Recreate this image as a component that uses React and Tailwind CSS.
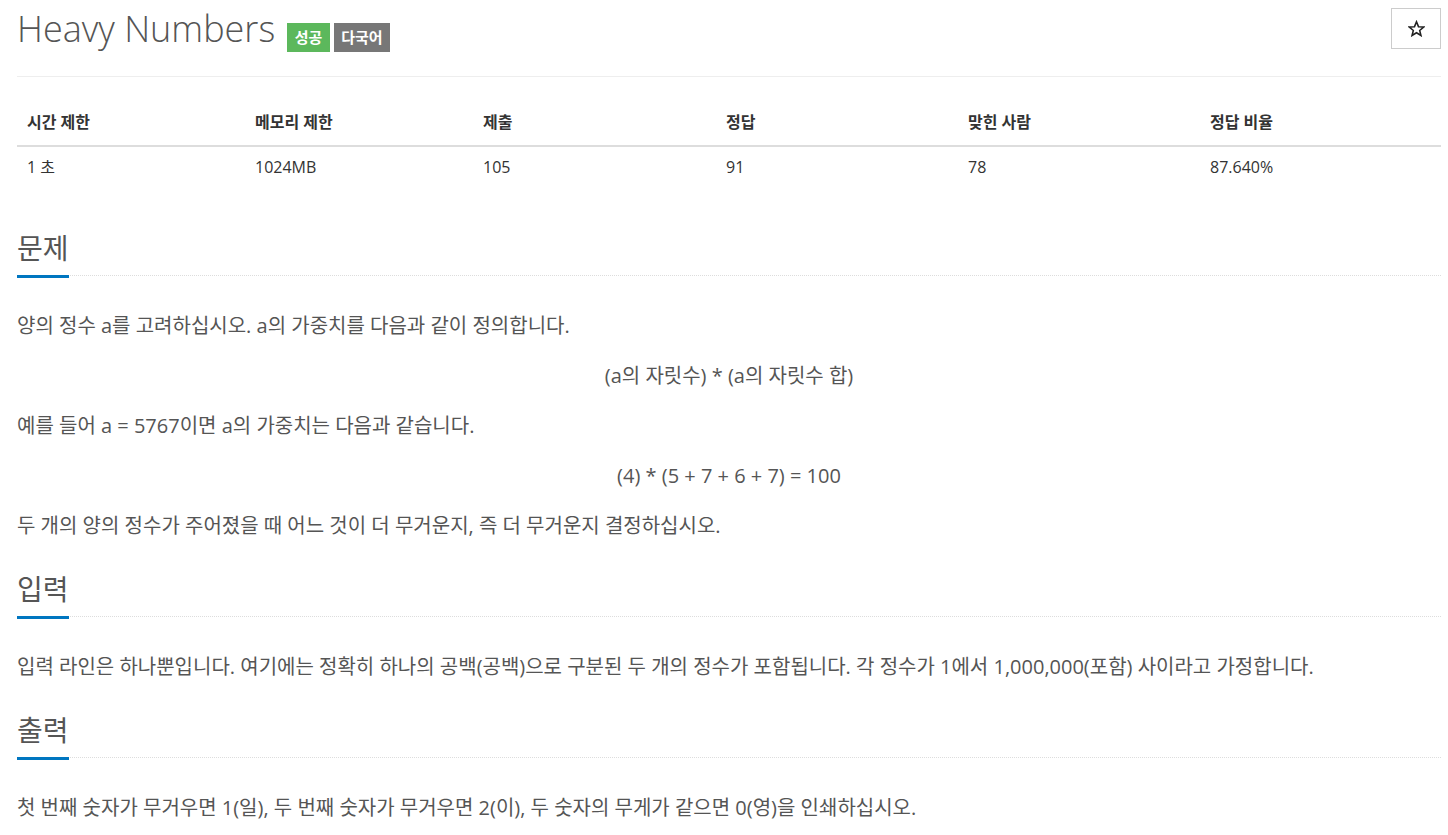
const stats = [
  { label: '시간 제한', value: '1 초', w: 'w-[228px]' },
  { label: '메모리 제한', value: '1024MB', w: 'w-[228px]' },
  { label: '제출', value: '105', w: 'w-[243px]' },
  { label: '정답', value: '91', w: 'w-[242px]' },
  { label: '맞힌 사람', value: '78', w: 'w-[242px]' },
  { label: '정답 비율', value: '87.640%', w: 'w-[241px]' },
];

function StarIcon() {
  return (
    <svg width="17" height="17" viewBox="0 0 24 24" fill="none" stroke="#222" strokeWidth="2.2" strokeLinejoin="miter">
      <path d="M12 2.5l2.8 6.9 7.4.5-5.7 4.8 1.8 7.2L12 18l-6.3 3.9 1.8-7.2-5.7-4.8 7.4-.5z" />
    </svg>
  );
}

function Headline({ title, className }) {
  return (
    <div className={`flex border-b border-dotted border-[#ddd] ${className}`}>
      <h2 className="text-[28px] leading-[34px] pb-[10px] border-b-[3px] border-[#0076c0] -mb-[3px] text-[#555] font-normal">
        {title}
      </h2>
    </div>
  );
}

export default function App() {
  return (
    <div className="min-h-screen bg-white pl-[17px] pr-[7px] font-['Open_Sans','Noto_Sans_CJK_KR',sans-serif] text-[#555]">
      {/* page header */}
      <div className="flex items-start justify-between pt-[8px] pb-[24px] border-b border-[#eee]">
        <div className="flex items-start">
          <h1 className="text-[36px] leading-[40px] mt-[1px] font-light text-[#555]">Heavy Numbers</h1>
          <div className="flex gap-[4px] ml-[12px] mt-[15px]">
            <span className="h-[29px] px-[7.5px] flex items-center bg-[#5cb85c] text-white text-[15px] font-bold">성공</span>
            <span className="h-[29px] px-[7.5px] flex items-center bg-[#777] text-white text-[15px] font-bold">다국어</span>
          </div>
        </div>
        <button className="w-[50px] h-[41px] border border-[#ccc] bg-white flex items-center justify-center">
          <StarIcon />
        </button>
      </div>

      {/* limits table */}
      <table className="mt-[27px] w-full border-collapse text-[16px] text-[#333]">
        <thead>
          <tr className="border-b-2 border-[#ddd]">
            {stats.map((s) => (
              <th key={s.label} className={`${s.w} text-left font-bold pl-[10px] pt-[8px] pb-[13px] leading-[20px]`}>
                {s.label}
              </th>
            ))}
          </tr>
        </thead>
        <tbody>
          <tr>
            {stats.map((s) => (
              <td key={s.label} className="pl-[10px] pt-[10px] pb-[8px] leading-[20px]">
                {s.value}
              </td>
            ))}
          </tr>
        </tbody>
      </table>

      {/* problem */}
      <Headline title="문제" className="mt-[46px]" />
      <div className="mt-[35px] text-[20px] leading-[30px]">
        <p className="mb-[20px]">양의 정수 a를 고려하십시오. a의 가중치를 다음과 같이 정의합니다.</p>
        <p className="mb-[20px] text-center">(a의 자릿수) * (a의 자릿수 합)</p>
        <p className="mb-[20px]">예를 들어 a = 5767이면 a의 가중치는 다음과 같습니다.</p>
        <p className="mb-[20px] text-center">(4) * (5 + 7 + 6 + 7) = 100</p>
        <p className="mb-[20px]">두 개의 양의 정수가 주어졌을 때 어느 것이 더 무거운지, 즉 더 무거운지 결정하십시오.</p>
      </div>

      {/* input */}
      <Headline title="입력" className="mt-[31px]" />
      <div className="mt-[35px] text-[20px] leading-[30px]">
        <p className="mb-[20px]">입력 라인은 하나뿐입니다. 여기에는 정확히 하나의 공백(공백)으로 구분된 두 개의 정수가 포함됩니다. 각 정수가 1에서 1,000,000(포함) 사이라고 가정합니다.</p>
      </div>

      {/* output */}
      <Headline title="출력" className="mt-[31px]" />
      <div className="mt-[35px] text-[20px] leading-[30px]">
        <p className="mb-[20px]">첫 번째 숫자가 무거우면 1(일), 두 번째 숫자가 무거우면 2(이), 두 숫자의 무게가 같으면 0(영)을 인쇄하십시오.</p>
      </div>
    </div>
  );
}
